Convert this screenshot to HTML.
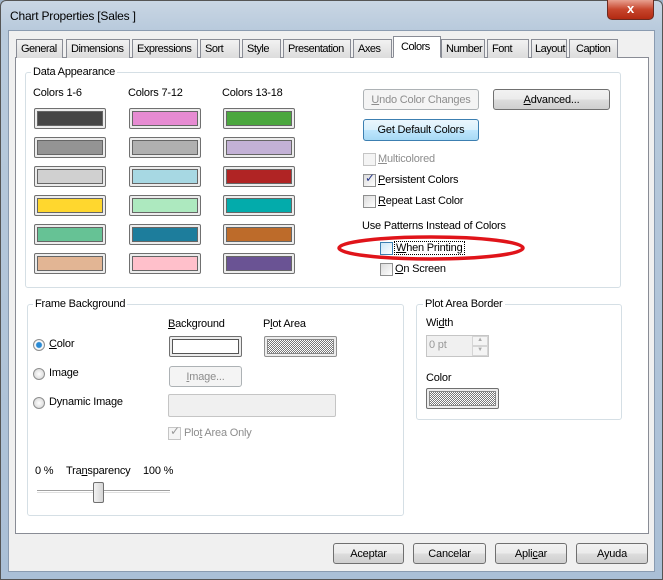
<!DOCTYPE html>
<html><head><meta charset="utf-8"><style>
*{box-sizing:border-box}
body{margin:0;width:663px;height:580px;overflow:hidden;background:#9fb3c8;font-family:"Liberation Sans",sans-serif;font-size:11px;letter-spacing:-0.2px;color:#000;position:relative}
.a{position:absolute}
.frame{left:0;top:0;width:663px;height:580px;background:linear-gradient(180deg,#c9d6e4 0,#b8cadc 30px,#aabfd6 100%);border:1px solid #555;border-radius:6px 6px 0 0}
.client{left:8px;top:30px;width:647px;height:542px;background:#f0f0f0;border:1px solid #8a9bb0}
.panel{left:15px;top:57px;width:634px;height:477px;background:#fff;border:1px solid #898c95}
.tab{top:39px;height:19px;border:1px solid #898c95;border-bottom:none;background:linear-gradient(#f2f2f2,#dcdcdc);padding:3px 0 0 4px;font-size:11px;letter-spacing:-0.5px;white-space:nowrap;overflow:hidden}
.tab.sel{top:36px;height:22px;background:#fff;border-bottom:1px solid #fff;padding-top:4px}
.grp{border:1px solid #d5dfe5;border-radius:3px}
.lg{background:#fff;padding:0 2px}
.sw{width:72px;height:21px;border:1px solid #707070;border-radius:2px;background:#ececec;padding:2px}
.sw div{width:100%;height:100%;border:1px solid #666}
.btn{border:1px solid #707070;border-radius:3px;background:linear-gradient(#f2f2f2 0,#ebebeb 50%,#dddddd 51%,#cfcfcf 100%);text-align:center;padding-top:4px}
.cb{width:13px;height:13px;border:1px solid #8e8f8f;background:linear-gradient(135deg,#dcdcdc,#fff)}
.rd{width:12px;height:12px;border:1px solid #8e8f8f;border-radius:50%;background:radial-gradient(#fff,#d0d0d0)}
.dis{color:#8d8d8d}
.hatch{background-image:repeating-conic-gradient(#777 0 25%,#fff 0 50%);background-size:2px 2px}
</style></head><body>
<div class="a frame"></div>
<div class="a" style="left:10px;top:9px;font-size:12px">Chart Properties [Sales ]</div>
<div class="a" style="left:607px;top:0;width:47px;height:20px;background:linear-gradient(#e8a090,#c7452c 50%,#b22a12);border:1px solid #6b2a20;border-top:none;border-radius:0 0 5px 5px;color:#fff;text-align:center;font-weight:bold;font-size:13px;line-height:18px">x</div>
<div class="a client"></div>
<div class="a panel"></div>

<div class="a tab" style="left:16px;width:47px">General</div>
<div class="a tab" style="left:66px;width:64px">Dimensions</div>
<div class="a tab" style="left:132px;width:66px">Expressions</div>
<div class="a tab" style="left:200px;width:40px">Sort</div>
<div class="a tab" style="left:242px;width:39px">Style</div>
<div class="a tab" style="left:283px;width:68px">Presentation</div>
<div class="a tab" style="left:353px;width:39px">Axes</div>
<div class="a tab sel" style="left:393px;width:48px;padding-left:7px">Colors</div>
<div class="a tab" style="left:441px;width:44px">Number</div>
<div class="a tab" style="left:487px;width:42px">Font</div>
<div class="a tab" style="left:531px;width:36px;padding-left:3px">Layout</div>
<div class="a tab" style="left:569px;width:49px;padding-left:6px">Caption</div>

<div class="a grp" style="left:25px;top:72px;width:596px;height:216px"></div>
<div class="a lg" style="left:31px;top:66px">Data Appearance</div>
<div class="a" style="left:33px;top:87px">Colors 1-6</div>
<div class="a" style="left:128px;top:87px">Colors 7-12</div>
<div class="a" style="left:222px;top:87px">Colors 13-18</div>

<div class="a sw" style="left:34px;top:108px"><div style="background:#464646"></div></div>
<div class="a sw" style="left:34px;top:137px"><div style="background:#949494"></div></div>
<div class="a sw" style="left:34px;top:166px"><div style="background:#d0d0d0"></div></div>
<div class="a sw" style="left:34px;top:195px"><div style="background:#ffd72e"></div></div>
<div class="a sw" style="left:34px;top:224px"><div style="background:#66c295"></div></div>
<div class="a sw" style="left:34px;top:253px"><div style="background:#e2b594"></div></div>
<div class="a sw" style="left:129px;top:108px"><div style="background:#e68bd2"></div></div>
<div class="a sw" style="left:129px;top:137px"><div style="background:#b0b0b0"></div></div>
<div class="a sw" style="left:129px;top:166px"><div style="background:#a7d8e3"></div></div>
<div class="a sw" style="left:129px;top:195px"><div style="background:#ade9bf"></div></div>
<div class="a sw" style="left:129px;top:224px"><div style="background:#1d7d9c"></div></div>
<div class="a sw" style="left:129px;top:253px"><div style="background:#ffc0cb"></div></div>
<div class="a sw" style="left:223px;top:108px"><div style="background:#4ba73e"></div></div>
<div class="a sw" style="left:223px;top:137px"><div style="background:#c3b1d6"></div></div>
<div class="a sw" style="left:223px;top:166px"><div style="background:#b02424"></div></div>
<div class="a sw" style="left:223px;top:195px"><div style="background:#03abab"></div></div>
<div class="a sw" style="left:223px;top:224px"><div style="background:#bd6b2a"></div></div>
<div class="a sw" style="left:223px;top:253px"><div style="background:#6a5394"></div></div>

<div class="a btn dis" style="left:363px;top:89px;width:116px;height:21px;background:#f4f4f4;border-color:#adb2b5"><u>U</u>ndo Color Changes</div>
<div class="a btn" style="left:493px;top:89px;width:117px;height:21px"><u>A</u>dvanced...</div>
<div class="a btn" style="left:363px;top:119px;width:116px;height:22px;border-color:#3c7fb1;background:linear-gradient(#eaf6fd,#d9f0fc 50%,#bee6fd 51%,#a7d9f5)">Get Default Colors</div>

<div class="a cb" style="left:363px;top:153px;border-color:#c5c5c5;background:#f4f4f4"></div>
<div class="a dis" style="left:378px;top:153px"><u>M</u>ulticolored</div>
<div class="a cb" style="left:363px;top:174px"></div>
<div class="a" style="left:365px;top:171px;font-size:12px;color:#2a3a8a">✓</div>
<div class="a" style="left:378px;top:174px"><u>P</u>ersistent Colors</div>
<div class="a cb" style="left:363px;top:195px"></div>
<div class="a" style="left:378px;top:195px"><u>R</u>epeat Last Color</div>
<div class="a" style="left:362px;top:220px">Use Patterns Instead of Colors</div>
<div class="a cb" style="left:380px;top:242px;border-color:#3c7fb1;background:linear-gradient(135deg,#cbe7f8,#fff)"></div>
<div class="a" style="left:394px;top:241px;border:1px dotted #000;padding:0 1px"><u>W</u>hen Printing</div>
<div class="a cb" style="left:380px;top:263px"></div>
<div class="a" style="left:395px;top:263px"><u>O</u>n Screen</div>
<svg class="a" style="left:335px;top:233px" width="192" height="30"><ellipse cx="96" cy="15" rx="92" ry="11" fill="none" stroke="#e0141a" stroke-width="3.5"/></svg>

<div class="a grp" style="left:27px;top:304px;width:377px;height:212px"></div>
<div class="a lg" style="left:33px;top:298px">Frame Background</div>
<div class="a" style="left:168px;top:318px"><u>B</u>ackground</div>
<div class="a" style="left:263px;top:318px">P<u>l</u>ot Area</div>
<div class="a rd" style="left:33px;top:339px;background:radial-gradient(#2a8ad4 0 2.5px,#fff 3.5px,#d0d0d0)"></div>
<div class="a" style="left:49px;top:338px"><u>C</u>olor</div>
<div class="a rd" style="left:33px;top:368px"></div>
<div class="a" style="left:49px;top:367px">Image</div>
<div class="a rd" style="left:33px;top:397px"></div>
<div class="a" style="left:49px;top:396px">Dynamic Image</div>
<div class="a" style="left:169px;top:336px;width:73px;height:21px;border:1px solid #707070;border-radius:2px;background:#ececec;padding:2px"><div style="height:100%;border:1px solid #555;background:#fff"></div></div>
<div class="a" style="left:264px;top:336px;width:73px;height:21px;border:1px solid #909090;border-radius:2px;background:#ececec;padding:2px"><div class="hatch" style="height:100%;border:1px solid #888"></div></div>
<div class="a btn dis" style="left:169px;top:366px;width:73px;height:21px;background:#f4f4f4;border-color:#adb2b5"><u>I</u>mage...</div>
<div class="a" style="left:168px;top:394px;width:168px;height:23px;border:1px solid #c5c5c5;border-radius:2px;background:#f0f0f0"></div>
<div class="a cb" style="left:168px;top:427px;border-color:#c5c5c5;background:#f4f4f4"></div>
<div class="a" style="left:170px;top:424px;font-size:12px;color:#999">✓</div>
<div class="a dis" style="left:184px;top:427px">Plo<u>t</u> Area Only</div>
<div class="a" style="left:35px;top:465px">0 %</div>
<div class="a" style="left:66px;top:465px">Tra<u>n</u>sparency</div>
<div class="a" style="left:143px;top:465px">100 %</div>
<div class="a" style="left:37px;top:490px;width:133px;height:3px;border-top:1px solid #a0a0a0;border-bottom:1px solid #e0e0e0"></div>
<div class="a" style="left:93px;top:482px;width:11px;height:21px;border:1px solid #707070;border-radius:2px;background:linear-gradient(90deg,#f2f2f2,#d5d5d5)"></div>

<div class="a grp" style="left:416px;top:304px;width:206px;height:116px"></div>
<div class="a lg" style="left:423px;top:298px">Plot Area Border</div>
<div class="a" style="left:426px;top:317px">Wi<u>d</u>th</div>
<div class="a" style="left:426px;top:335px;width:63px;height:22px;border:1px solid #c5c5c5;background:#f0f0f0;color:#999;padding:3px 2px">0 pt</div>
<div class="a" style="left:472px;top:336px;width:16px;height:10px;border:1px solid #d5d5d5;background:#f4f4f4;font-size:6px;color:#aaa;text-align:center">▲</div>
<div class="a" style="left:472px;top:346px;width:16px;height:10px;border:1px solid #d5d5d5;background:#f4f4f4;font-size:6px;color:#aaa;text-align:center">▼</div>
<div class="a" style="left:426px;top:372px">Color</div>
<div class="a" style="left:426px;top:388px;width:73px;height:21px;border:1px solid #707070;border-radius:2px;background:#ececec;padding:2px"><div class="hatch" style="height:100%;border:1px solid #888"></div></div>

<div class="a btn" style="left:333px;top:543px;width:71px;height:21px">Aceptar</div>
<div class="a btn" style="left:413px;top:543px;width:73px;height:21px">Cancelar</div>
<div class="a btn" style="left:495px;top:543px;width:72px;height:21px">Apli<u>c</u>ar</div>
<div class="a btn" style="left:576px;top:543px;width:72px;height:21px">Ayuda</div>
</body></html>
